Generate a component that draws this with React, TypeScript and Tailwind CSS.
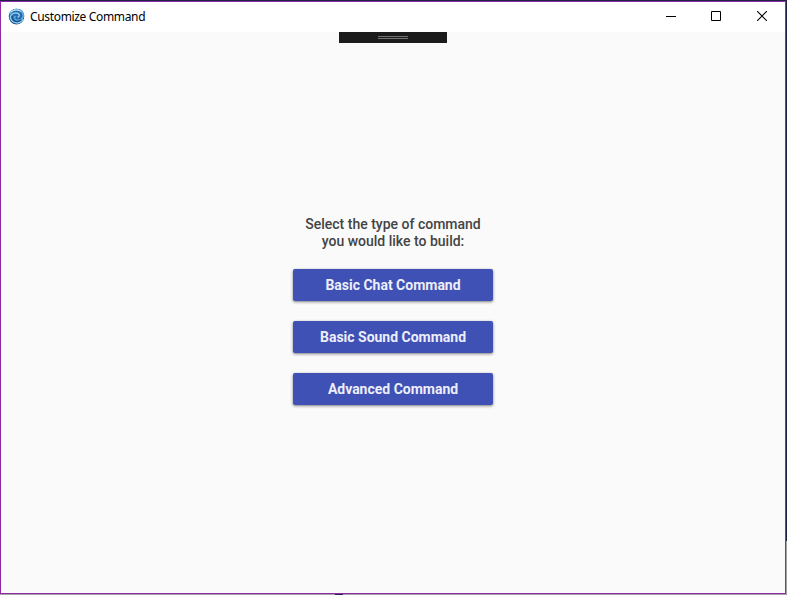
import React from "react";

function SwirlIcon() {
  return (
    <svg width="17" height="17" viewBox="0 0 34 34" className="mb-0.5 shrink-0">
      <circle cx="17" cy="17" r="15.5" fill="#2469a9" />
      <path d="M2 20C5 32 18 37 28 28C31 25 32 22 32 18C29 27 21 31 14 29C8 28 4 25 2 20Z" fill="#123a72" />
      <g fill="none" strokeLinecap="round">
        <path d="M4 11C10 1 24 1 29 9C33 17 28 25 20 25C13 25 11 20 14 17" stroke="#5aa9da" strokeWidth="3.6" />
        <path d="M30 23C24 32 11 32 6 23C3 15 9 9 17 10C24 11 24 17 20 18" stroke="#8ccced" strokeWidth="3" />
        <path d="M6 8C13 2 22 3 26 8" stroke="#d2edf8" strokeWidth="2" />
        <path d="M8 17C9 26 18 30 26 24" stroke="#174f91" strokeWidth="2.8" />
      </g>
    </svg>
  );
}

function TitleBar() {
  return (
    <header className="flex h-[30px] shrink-0 items-center bg-white pl-[7px]">
      <SwirlIcon />
      <h1 className="ml-[5px] w-[120px] whitespace-nowrap font-['Noto_Sans',sans-serif] text-[12px] leading-[16px] tracking-[-0.34px] text-black">
        Customize Command
      </h1>
      <div className="ml-auto flex h-full text-black">
        <button aria-label="Minimize" className="flex w-[45px] items-center justify-center pl-0.5">
          <svg width="11" height="11" shapeRendering="crispEdges"><path d="M0 4H10V5H0Z" fill="currentColor" /></svg>
        </button>
        <button aria-label="Maximize" className="flex w-[46px] items-center justify-center pb-0.5">
          <svg width="10" height="10"><path d="M.5 .5H9.5V9.5H.5Z" fill="none" stroke="currentColor" /></svg>
        </button>
        <button aria-label="Close" className="flex w-[46px] items-center justify-center pb-0.5">
          <svg width="10" height="10"><path d="M0 0L10 10M10 0L0 10" fill="none" stroke="currentColor" strokeWidth="1.1" /></svg>
        </button>
      </div>
    </header>
  );
}

function CommandButton({ children }: { children: React.ReactNode }) {
  return (
    <button className="h-8 w-[200px] rounded-[2px] bg-[#3f51b5] text-[14px] font-bold leading-4 tracking-[-0.01px] text-[#eceefa] shadow-[0_1px_3px_rgba(0,0,0,0.5)]">
      {children}
    </button>
  );
}

export default function App() {
  return (
    <div className="flex h-[595px] w-[787px] flex-col overflow-hidden bg-[linear-gradient(to_bottom,#1d2547_541px,#a3a0a6_541px)]">
      <div className="mt-px flex h-[593px] w-[786px] flex-col border border-[#9029a3] bg-[#fafafa] font-[Roboto,sans-serif]">
        <TitleBar />
        <div className="ml-[338px] flex h-[11px] w-[108px] shrink-0 flex-col items-center gap-px bg-[#1b1b1b] pt-1">
          <div className="h-px w-[30px] bg-[#737373]" />
          <div className="h-px w-[30px] bg-[#737373]" />
        </div>
        <main className="flex flex-col items-center pt-[173px]">
          <p className="text-center text-[14px] font-medium leading-[17px] text-[#444]">
            Select the type of command
            <br />
            you would like to build:
          </p>
          <div className="mt-[19px] flex flex-col gap-5">
            <CommandButton>Basic Chat Command</CommandButton>
            <CommandButton>Basic Sound Command</CommandButton>
            <CommandButton>Advanced Command</CommandButton>
          </div>
        </main>
      </div>
      <div className="flex h-px bg-[#a3a0a6]">
        <div className="ml-[335px] w-2 bg-[#29255c]" />
      </div>
    </div>
  );
}
